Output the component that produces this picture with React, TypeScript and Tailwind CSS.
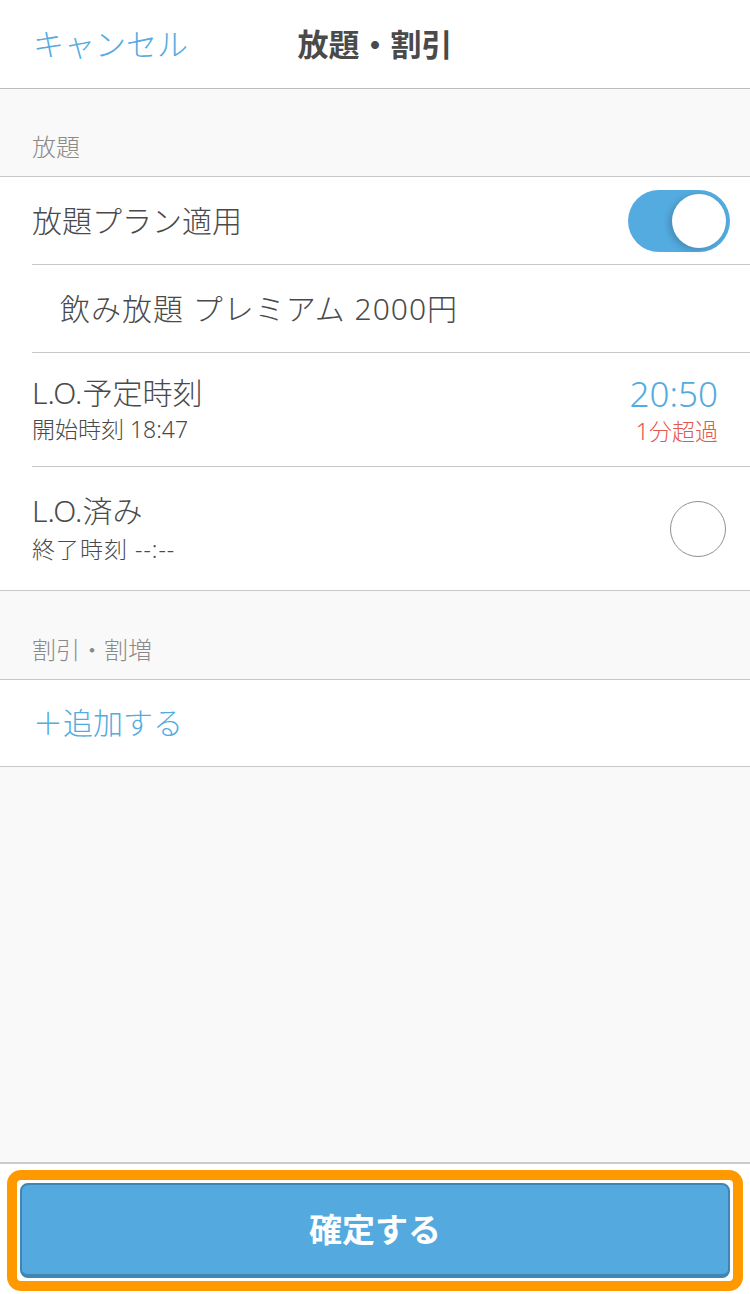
import { useState } from "react";

const font = { fontFamily: '"Noto Sans", "Noto Sans CJK JP", sans-serif' };

function Toggle({ on, onClick }: { on: boolean; onClick: () => void }) {
    return (
        <button
            onClick={onClick}
            className={`flex h-[62px] w-[102px] items-center rounded-full p-[4px] ${on ? "justify-end bg-[#54abdf]" : "justify-start bg-[#e5e5e5]"}`}
        >
            <span className="block h-[54px] w-[54px] rounded-full bg-white shadow-[-3px_2px_6px_rgba(0,0,0,0.18)]" />
        </button>
    );
}

export default function App() {
    const [plan, setPlan] = useState(true);
    const [done, setDone] = useState(false);

    return (
        <div style={font} className="flex min-h-[1294px] flex-col bg-[#f9f9f9] font-light text-[#4a4a4a]">
            {/* ヘッダー */}
            <div className="grid h-[89px] grid-cols-[1fr_auto_1fr] items-center border-b border-[#bdbdbd] bg-white px-[33px]">
                <button className="justify-self-start text-[31px] leading-none text-[#54abdf]">キャンセル</button>
                <div className="text-[31px] font-bold leading-none text-[#4a4a4a]">放題・割引</div>
                <div />
            </div>

            {/* 放題 */}
            <div className="flex h-[87px] items-end pb-[17px] pl-[32px] text-[24px] leading-none text-[#8a8a8a]">放題</div>
            <div className="border-y border-[#c8c8c8] bg-white">
                <div className="ml-[32px] flex h-[88px] items-center justify-between border-b border-[#c8c8c8] pr-[20px]">
                    <span className="text-[30px] leading-none">放題プラン適用</span>
                    <Toggle on={plan} onClick={() => setPlan(!plan)} />
                </div>
                <div className="ml-[32px] flex h-[88px] items-center border-b border-[#c8c8c8] pl-[28px]">
                    <span className="text-[30px] leading-none tracking-[1px]">飲み放題 プレミアム 2000円</span>
                </div>
                <div className="ml-[32px] flex h-[114px] items-center justify-between border-b border-[#c8c8c8] pr-[32px]">
                    <div className="flex flex-col gap-[10px]">
                        <span className="text-[30px] leading-none">L.O.予定時刻</span>
                        <span className="text-[23px] leading-none">開始時刻 18:47</span>
                    </div>
                    <div className="flex flex-col items-end gap-[9px]">
                        <span className="text-[35px] leading-none text-[#54abdf]">20:50</span>
                        <span className="text-[23px] leading-none text-[#e2584f]">1分超過</span>
                    </div>
                </div>
                <div className="ml-[32px] flex h-[123px] items-center justify-between pr-[24px]">
                    <div className="flex flex-col gap-[12px]">
                        <span className="text-[30px] leading-none">L.O.済み</span>
                        <span className="text-[23px] leading-none tracking-[1px]">終了時刻 --:--</span>
                    </div>
                    <button
                        onClick={() => setDone(!done)}
                        className={`h-[56px] w-[56px] rounded-full border ${done ? "border-[#54abdf] bg-[#54abdf]" : "border-[#8f8f8f] bg-white"}`}
                    />
                </div>
            </div>

            {/* 割引・割増 */}
            <div className="flex h-[88px] items-end pb-[17px] pl-[32px] text-[24px] leading-none text-[#8a8a8a]">割引・割増</div>
            <div className="flex h-[88px] items-center border-y border-[#c8c8c8] bg-white pl-[33px]">
                <button className="text-[30px] leading-none text-[#54abdf]">＋追加する</button>
            </div>

            <div className="flex-1" />

            {/* フッター */}
            <div className="h-[132px] border-t-2 border-[#cccccc] bg-white px-[7px] pb-[3px] pt-[6px]">
                <div className="rounded-[14px] border-[10px] border-[#ff9900] p-[3px]">
                    <button className="flex h-[95px] w-full items-center justify-center rounded-[8px] border-2 border-b-4 border-[#3f86b4] bg-[#54aadf] text-[33px] font-bold text-white">
                        確定する
                    </button>
                </div>
            </div>
        </div>
    );
}
